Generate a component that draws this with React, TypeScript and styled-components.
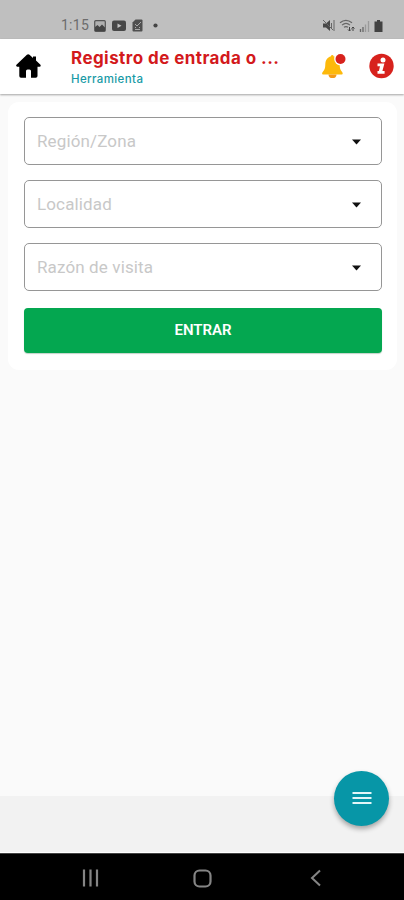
import React from "react";
import styled, { createGlobalStyle } from "styled-components";

const GlobalStyle = createGlobalStyle`
  * { box-sizing: border-box; }
  body { margin: 0; background: #fafafa; font-family: Roboto, sans-serif; }
`;

const Screen = styled.div`
  width: 404px;
  height: 900px;
  display: flex;
  flex-direction: column;
  overflow: hidden;
  background: #fafafa;
`;

const StatusBar = styled.div`
  height: 39px;
  flex: none;
  display: flex;
  justify-content: space-between;
  padding: 18px 21px 0 61px;
  background: #bfbfbf;
  color: #6c6c6c;
`;

const StatusGroup = styled.div<{ $gap: number }>`
  display: flex;
  align-items: center;
  height: 15px;
  gap: ${(p) => p.$gap}px;
  svg { display: block; }
  svg:nth-child(5) { margin-left: 4px; }
`;

const Clock = styled.span`
  font-size: 14px;
  line-height: 15px;
  letter-spacing: 0.25px;
  width: 28px;
  margin-right: -1px;
  white-space: nowrap;
`;

const Header = styled.header`
  height: 55px;
  flex: none;
  display: flex;
  align-items: flex-start;
  background: #fff;
  box-shadow: 0 1px 2px rgba(0, 0, 0, 0.35);
  padding: 0 10px 0 16px;
  z-index: 1;
`;

const HomeButton = styled.div`
  width: 55px;
  padding-top: 15px;
  svg { display: block; }
`;

const Titles = styled.div`
  width: 250px;
  padding-top: 8px;
  white-space: nowrap;
`;

const Title = styled.h1`
  margin: 0;
  font: 700 17px/22px Inter, sans-serif;
  letter-spacing: 0.43px;
  color: #d3191c;
`;

const Subtitle = styled.div`
  font: 500 11.5px/16px Inter, sans-serif;
  letter-spacing: 0.38px;
  margin-top: 2px;
  color: #199aa6;
`;

const Actions = styled.div`
  display: flex;
  gap: 22px;
  padding-top: 14px;
  svg { display: block; }
`;

const Main = styled.main`
  height: 702px;
  flex: none;
  padding: 8px 7px 0 8px;
`;

const Card = styled.form`
  height: 268px;
  padding: 15px 15px 17px 16px;
  border-radius: 11px;
  background: #fff;
  display: flex;
  flex-direction: column;
  gap: 15px;
`;

const Field = styled.div`
  height: 48px;
  flex: none;
  display: flex;
  align-items: center;
  justify-content: space-between;
  padding: 0 20px 0 12px;
  border: 1px solid #969696;
  border-radius: 5px;
  font-size: 17px;
  letter-spacing: 0.13px;
  color: #c8c8c8;
  svg { display: block; margin-top: 2px; }
`;

const Submit = styled.button`
  height: 45px;
  flex: none;
  margin-top: 2px;
  padding: 0;
  border: 0;
  border-radius: 4px;
  background: #04a750;
  box-shadow: 0 1px 1px rgba(0, 70, 30, 0.25);
  color: #fff;
  font: 600 15px/45px Roboto, sans-serif;
`;

const Footer = styled.div`
  height: 57px;
  flex: none;
  display: flex;
  justify-content: flex-end;
  padding-right: 15px;
  background: #f2f2f2;
  border-bottom: 1px solid #fff;
`;

const MenuButton = styled.div`
  width: 55px;
  height: 55px;
  margin-top: -25.5px;
  display: flex;
  align-items: center;
  justify-content: center;
  border-radius: 50%;
  background: #0796a7;
  box-shadow: 0 3px 5px rgba(0, 0, 0, 0.32);
`;

const NavBar = styled.nav`
  height: 47px;
  flex: none;
  display: flex;
  align-items: center;
  justify-content: space-between;
  padding: 2px 81px 0 82px;
  background: #000;
  border-top: 1px solid #444;
`;

const fields = ["Región/Zona", "Localidad", "Razón de visita"];

export default function App() {
  return (
    <Screen>
      <GlobalStyle />
      <StatusBar>
        <StatusGroup $gap={6}>
          <Clock>1:15</Clock>
          <svg width="12" height="12" viewBox="0 0 12 12">
            <rect x=".7" y=".7" width="10.6" height="10.6" rx="1" fill="#b0b0b0" stroke="#555" strokeWidth="1.2" />
            <path d="M1 10V7l2.500-2 2 2L8 4.500l3 3V11H1z" fill="#444" />
          </svg>
          <svg width="14" height="12" viewBox="0 0 14 12">
            <rect y=".5" width="14" height="10.500" rx="2" fill="#484848" />
            <path d="M5.500 3.500l4 2.200-4 2.200z" fill="#c4c4c4" />
          </svg>
          <svg width="11" height="13" viewBox="0 0 11 13">
            <path d="M3.500.5H9.500a1 1 0 011 1v10a1 1 0 01-1 1h-8a1 1 0 01-1-1v-8z" fill="#505050" />
            <path d="M3 5l2 2 4-4M3 10.500h5M3 8.500h1m3 0h1" fill="none" stroke="#aaa" />
          </svg>
          <svg width="5" height="5" viewBox="0 0 5 5">
            <circle cx="2.5" cy="2.5" r="2.1" fill="#454545" />
          </svg>
        </StatusGroup>
        <StatusGroup $gap={4}>
          <svg width="13" height="13" viewBox="0 0 13 13">
            <path d="M1 4.500h3L8 1v11L4 8.500H1z" fill="#484848" />
            <path d="M1 1l10 10M9.500 4v5M12 1v11" stroke="#666" />
          </svg>
          <svg width="16" height="13" viewBox="0 0 16 13">
            <path d="M1 3.800C4.800.5 9 .5 13 3.800M3 6.100c2.600-2.200 5.400-2.200 8 0M5 8.300c1.300-1 2.700-1 4 0" fill="none" stroke="#666" strokeWidth="1.200" />
            <path d="M10.500 8v4m-1.500-1.500l1.500 1.500 1.500-1.500M14 12V8m-1.500 1.500L14 8l1.500 1.500" fill="none" stroke="#444" />
          </svg>
          <svg width="11" height="12" viewBox="0 0 11 12">
            <path d="M1.500 12v-3M4 12V7" stroke="#666" strokeWidth="1.300" />
            <path d="M6.500 12V4.500M9.500 12V1" stroke="#9a9a9a" strokeWidth="1.300" />
          </svg>
          <svg width="9" height="12" viewBox="0 0 9 12">
            <path d="M3 0h3v1.500h2.500V12h-8V1.500H3z" fill="#424242" />
          </svg>
        </StatusGroup>
      </StatusBar>
      <Header>
        <HomeButton>
          <svg width="25" height="25" viewBox="0 0 25 25">
            <path d="M10.900 .8Q12.200-.3 13.500.8L17 3.900V2.500h3v4l4.200 4q1.300 1.700-.7 2.200H21.500V22q0 1.800-1.800 1.800H15V17q0-1.500-1.500-1.500h-2Q10 15.500 10 17v6.800H5Q3.300 23.800 3.300 22v-9.300H1.300q-2-.6-.6-2.200z" fill="#000" />
          </svg>
        </HomeButton>
        <Titles>
          <Title>Registro de entrada o ...</Title>
          <Subtitle>Herramienta</Subtitle>
        </Titles>
        <Actions>
          <svg width="26" height="27" viewBox="0 0 26 27">
            <path d="M11.200 2q1.300 0 1.300 1.300c4.300 1 6 4.200 6.100 8.200.1 4 .8 5.700 2.500 7.400 1.200 1.300.6 2.600-.8 2.600H2.500c-1.400 0-2-1.300-.8-2.600 1.700-1.700 2.600-3.400 2.600-7.400.1-4 1.900-7.200 5.700-8.200Q10 2 11.200 2z" fill="#fdb90b" />
            <path d="M7.500 21.400h8a4 3.700 0 01-8 0z" fill="#f59a16" />
            <circle cx="19.500" cy="6" r="6.300" fill="#fff" />
            <circle cx="19.500" cy="6" r="5" fill="#d7221d" />
          </svg>
          <svg width="25" height="26" viewBox="0 0 25 26">
            <circle cx="12.500" cy="13" r="12.200" fill="#d7221d" />
            <circle cx="14" cy="7" r="2.500" fill="#fff" />
            <path d="M8.500 10.500h6.900l-2 7.500h2.200v2.800H8.500V18h1.400l1.100-4.700H8.500z" fill="#fff" />
          </svg>
        </Actions>
      </Header>
      <Main>
        <Card>
          {fields.map((label) => (
            <Field key={label}>
              {label}
              <svg width="9" height="6" viewBox="0 0 9 6">
                <path d="M0 .5h9L4.500 5.500z" fill="#111" />
              </svg>
            </Field>
          ))}
          <Submit type="button">ENTRAR</Submit>
        </Card>
      </Main>
      <Footer>
        <MenuButton>
          <svg width="20" height="14" viewBox="0 0 20 14">
            <path d="M.5 2h19M.5 7h19M.5 12h19" stroke="#e2f6f8" strokeWidth="2.200" />
          </svg>
        </MenuButton>
      </Footer>
      <NavBar>
        <svg width="17" height="18" viewBox="0 0 17 18">
          <path d="M2 .5v17M8.500 .5v17M15 .5v17" stroke="#858585" strokeWidth="2.200" />
        </svg>
        <svg width="19" height="19" viewBox="0 0 19 19">
          <rect x="1.500" y="1.500" width="16" height="16" rx="5" fill="none" stroke="#858585" strokeWidth="2.200" />
        </svg>
        <svg width="17" height="18" viewBox="0 0 17 18">
          <path d="M14 1.500L6 9l8 7.500" fill="none" stroke="#858585" strokeWidth="2" />
        </svg>
      </NavBar>
    </Screen>
  );
}
